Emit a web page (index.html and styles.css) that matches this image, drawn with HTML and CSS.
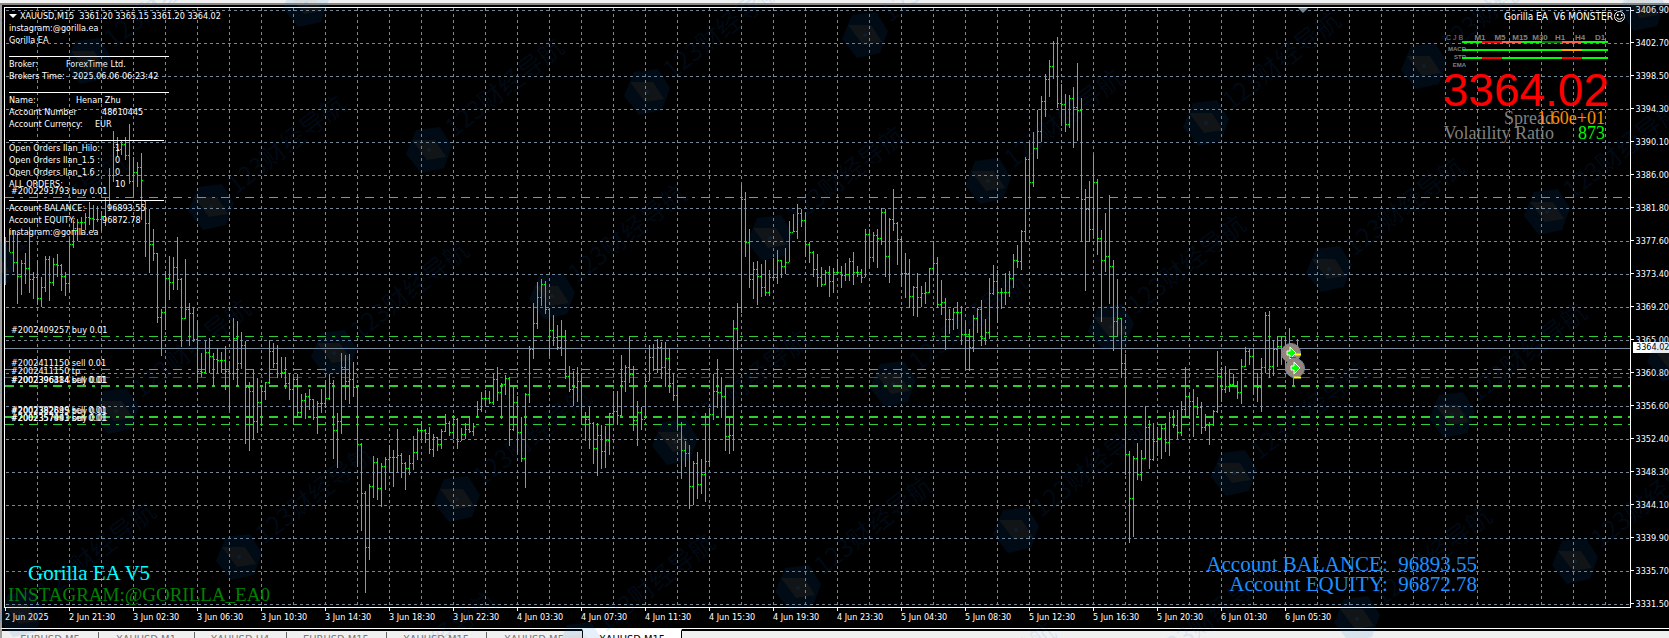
FILE: index.html
```html
<!DOCTYPE html>
<html lang="en">
<head>
<meta charset="utf-8">
<title>XAUUSD,M15</title>
<link rel="stylesheet" href="styles.css">
</head>
<body>
<div class="window">
  <div class="topstrip"></div>
  <main class="chart">
    <section class="plot">
      <svg class="canvas" id="canvas" aria-label="XAUUSD M15 bar chart"></svg>
      <div class="info">
        <h1 class="symbol"><span class="caret"></span>XAUUSD,M15 &nbsp;3361.20 3365.15 3361.20 3364.02</h1>
        <p>instagram:@gorilla.ea</p>
        <p>Gorilla EA</p>
        <hr class="wide">
        <p><span class="l57">Broker:</span>ForexTime Ltd.</p>
        <p><span class="l64">Brokers Time:</span>2025.06.06 06:23:42</p>
        <hr class="wide">
        <p><span class="l67">Name:</span>Henan Zhu</p>
        <p><span class="l93">Account Number</span>48610445</p>
        <p><span class="l86">Account Currency:</span>EUR</p>
        <hr>
        <p><span class="l106">Open Orders Ilan_Hilo:</span>1</p>
        <p><span class="l106">Open Orders Ilan_1.5 :</span>0</p>
        <p><span class="l106">Open Orders Ilan_1.6 :</span>0</p>
        <p><span class="l106">ALL ORDERS:</span>10</p>
        <hr>
        <p><span class="l98">Account BALANCE:</span>96893.55</p>
        <p><span class="l93">Account EQUITY:</span>96872.78</p>
        <p>instagram:@gorilla.ea</p>
      </div>
      <div class="panel">
        <div class="expert"><span>Gorilla EA &nbsp;V6 MONSTER</span>
          <svg width="13" height="13" viewBox="0 0 13 13"><circle cx="6.500" cy="6.500" r="5" fill="none" stroke="#fff"/><path d="M4 4h1.500v2H4zM8 4h1.500v2H8z" fill="#fff"/><path d="M3.500 7.500Q6.500 11 9.500 7.500" fill="none" stroke="#fff"/></svg>
        </div>
        <div class="signals">
          <div class="frames"><span class="cjb">C J B</span><span>M1</span><span>M5</span><span>M15</span><span>M30</span><span>H1</span><span>H4</span><span>D1</span></div>
          <div class="bar"><i></i><i class="red"></i><i class="tomato"></i><i></i><i class="dark"></i><i class="tomato"></i><i class="end"></i></div>
          <div class="name">MACD</div>
          <div class="bar"><i></i><i></i><i></i><i></i><i></i><i class="orange"></i><i class="end"></i></div>
          <div class="name">STR</div>
          <div class="bar"><i></i><i class="red"></i><i></i><i></i><i></i><i class="red"></i><i class="end"></i></div>
          <div class="name">EMA</div>
        </div>
        <div class="bigprice">3364.02</div>
        <dl class="stats">
          <dt class="spread">Spread</dt><dd class="amber">1.60e+01</dd>
          <dt>Volatility Ratio</dt><dd class="lime">873</dd>
        </dl>
      </div>
      <div class="brand"><p class="ea">Gorilla EA V5</p><p class="insta">INSTAGRAM:@GORILLA_EA0</p></div>
      <div class="account"><p>Account BALANCE:&nbsp; 96893.55</p><p>Account EQUITY:&nbsp; 96872.78</p></div>
    </section>
    <aside class="prices" id="prices"><output class="current">3364.02</output></aside>
    <footer class="times" id="times"></footer>
  </main>
  <nav class="tabs">
    <button class="w96">EURUSD,M5</button><button class="w96">XAUUSD,M1</button><button class="w92">XAUUSD,H4</button><button class="w100">EURUSD,M15</button><button class="w100">XAUUSD,M15</button><button class="w96">XAUUSD,M5</button><button class="w100 active">XAUUSD,M15</button><span class="rest"></span>
  </nav>
  <svg class="watermark" id="watermark" aria-hidden="true"></svg>
</div>
<script src="chart.js"></script>
</body>
</html>
```
FILE: styles.css
```css
* { box-sizing: border-box; }
body { margin: 0; background: #000; color: #fff; font: 9px/12px "DejaVu Sans Condensed", "DejaVu Sans", sans-serif; overflow: hidden; }
p, h1, dl, dd { margin: 0; font-weight: normal; }
.window { position: relative; height: 100vh; display: flex; flex-direction: column; overflow: hidden; }
.topstrip { height: 5px; background: #f0f0f0; border-bottom: 2px solid #888; flex: none; }
.chart { flex: 1; min-height: 0; display: grid; grid-template-columns: minmax(0, 1fr) 38px; grid-template-rows: minmax(0, 1fr) 20px; padding-top: 2px; border-left: 2px solid #a0a0a0; }
.plot { position: relative; margin-left: 2px; border: 1px solid #fff; overflow: hidden; }
.canvas { position: absolute; inset: 0; width: 100%; height: 100%; font-size: 9px; }
.grid { stroke: #778899; stroke-dasharray: 3 3; fill: none; }
.level { stroke: #32cd32; stroke-dasharray: 9 6 3 6; }
.level.thick { stroke-width: 2; }
.level.stop { stroke: #f00; }
.bid { stroke: #778899; }
.bars { stroke: #0f0; fill: none; }
.order { fill: #fff; }

.info { position: absolute; left: 4px; top: 1px; white-space: nowrap; }
.info p { display: flex; height: 12px; }
.symbol { display: flex; align-items: center; font-size: 9px; height: 13px; }
.caret { border: 4px solid transparent; border-top-color: #fff; border-bottom: 0; margin-right: 3px; }
.info hr { width: 155px; height: 1px; margin: 10px 0 1px; border: 0; background: #fff; }
.info hr.wide { width: 160px; }
.l57 { width: 57px; } .l64 { width: 64px; } .l67 { width: 67px; } .l86 { width: 86px; }
.l93 { width: 93px; } .l98 { width: 98px; } .l106 { width: 106px; }

.panel { position: absolute; right: 4px; top: 2px; width: 186px; }
.expert { display: flex; justify-content: flex-end; align-items: center; height: 13px; font-size: 10px; }
.signals { margin: 11px 0 0 6px; color: #808080; font: bold 8px/8px "Liberation Sans", sans-serif; }
.frames { display: flex; height: 7px; }
.frames span { width: 20px; text-align: center; }
.frames .cjb { width: 24px; text-align: left; font-size: 7px; font-weight: normal; }
.bar { display: flex; height: 2px; padding-left: 16px; position: relative; }
.bar i { width: 20px; background: #0f0; }
.bar .end { width: 26px; }
.bar .red { background: #f00; }
.bar .tomato { background: #ff6347; }
.bar .dark { background: #008000; }
.bar .orange { background: #ffa500; }
.name { width: 20px; height: 6px; font-size: 6px; text-align: right; line-height: 13px; }
.bigprice { margin: 5px 17px 0 0; color: #f00; font: 46px/40px "Liberation Sans", sans-serif; text-align: right; }
.stats { margin: 1px 17px 0 0; color: #808080; font: 18px/15px "Liberation Serif", serif; display: grid; grid-template-columns: 114px 51px; white-space: nowrap; }
.stats dt { text-align: right; }
.stats dd { display: flex; justify-content: flex-end; }
.amber { color: #ff8c00; }
.lime { color: #0f0; }

.brand { position: absolute; left: 3px; bottom: 2px; font-family: "Liberation Serif", serif; }
.ea { margin-left: 20px; color: #0ff; font-size: 21px; line-height: 21px; }
.insta { color: #008000; font-size: 19px; line-height: 21px; }
.account { position: absolute; right: 153px; bottom: 13px; color: #1e90ff; font: 21px/20px "Liberation Serif", serif; text-align: right; }

.prices { position: relative; margin-top: -3px; font-size: 9px; }
.price { display: flex; align-items: center; height: 33px; gap: 2px; white-space: nowrap; }
.price:first-of-type { height: 12px; margin-bottom: 10px; }
.price::before { content: ""; width: 3px; height: 1px; background: #fff; }
.current { position: absolute; left: 2px; right: 0; top: 338px; height: 11px; padding-left: 3px; background: #fff; color: #000; line-height: 11px; }
.times { grid-column: 1 / -1; display: flex; padding-left: 3px; overflow: hidden; }
.times time { flex: 0 0 64px; white-space: nowrap; line-height: 12px; }
.times time::before { content: ""; display: block; width: 1px; height: 3px; background: #fff; }

.tabs { flex: none; display: flex; height: 10px; overflow: hidden; background: #f0f0f0; border-top: 1px solid #fff; border-left: 2px solid #a0a0a0; align-items: flex-start; }
.tabs button { flex: none; margin: 0; padding: 2px 0 0; border: 0; border-top: 2px solid #000; background: #f0f0f0; color: #777; font: 11px/13px "DejaVu Sans Condensed", sans-serif; position: relative; }
.tabs button + button::before { content: ""; position: absolute; left: 0; top: 1px; width: 1px; height: 8px; background: #666; }
.tabs .active { background: #fff; color: #000; border-top-color: #fff; border-left: 1px solid #000; border-right: 1px solid #000; }
.tabs .active::before { display: none; }
.rest { flex: 1; border-top: 2px solid #000; }
.w92 { width: 92px; } .w96 { width: 96px; } .w100 { width: 100px; }

.watermark { position: absolute; inset: 0; width: 100%; height: 100%; pointer-events: none; font: 25px "Noto Sans CJK SC", sans-serif; }
.mark { fill: rgba(0, 105, 220, 0.1); }
.mark-text { fill: rgba(0, 105, 220, 0.1); }
.diamond { fill: rgba(255, 150, 40, 0.07); }
```
FILE: chart.js
```js
// One bar each: high, low, close (pixel rows of the chart window); a bar opens at the previous close.
const BARS = `237,285,241 229,252,252 230,272,262 233,304,276 260,295,263 253,284,268 227,293,279 272,299,277 261,304,298 277,307,287
256,292,259 256,301,282 258,286,264 254,277,265 264,291,276 272,296,283 239,292,244 220,248,230 219,241,222 217,235,222
213,230,217 202,225,218 205,232,219 206,222,219 211,231,216 198,226,200 168,210,175 131,182,147 137,157,149 141,155,144
137,160,155 124,184,181 157,197,172 162,187,167 153,220,180 201,257,223 209,273,244 229,261,253 253,323,317 309,356,312
271,330,278 256,300,282 257,290,267 237,290,279 278,347,318 259,319,309 303,346,313 307,342,339 321,382,371 353,377,372
341,373,352 338,373,356 353,387,359 348,373,360 352,373,360 346,390,371 361,410,373 318,380,338 321,386,363 332,369,345
341,444,387 382,451,391 369,440,421 378,433,402 387,426,391 382,400,382 340,384,351 343,368,363 345,378,373 357,378,372
357,389,383 373,400,389 377,424,379 374,417,412 394,417,400 393,419,396 389,410,399 399,420,417 401,434,403 389,413,403
380,408,398 374,400,383 380,459,430 413,468,421 353,434,367 355,400,381 354,404,379 362,397,387 387,467,444 443,531,493
491,593,547 484,560,486 456,498,462 458,500,488 463,507,466 457,490,459 445,473,457 450,487,457 429,473,455 453,478,463
462,490,468 455,475,463 436,470,452 428,460,430 421,439,430 429,443,433 427,454,449 434,457,437 437,451,444 429,449,431
414,432,423 421,436,432 415,439,419 418,449,441 428,441,434 423,439,429 416,433,431 423,436,426 401,416,409 392,412,398
390,406,398 391,404,402 374,405,379 367,401,392 383,419,384 375,395,378 377,446,429 387,431,402 396,453,432 417,462,458
393,488,394 346,403,349 303,359,323 282,329,297 279,306,284 281,314,309 308,356,330 315,346,337 325,350,347 320,356,336
330,379,376 366,392,389 371,406,387 367,402,381 373,424,417 412,441,419 407,449,423 422,464,448 423,476,435 425,469,451
426,468,440 413,455,413 391,422,411 391,425,415 355,416,381 365,392,367 336,383,374 366,431,420 401,446,412 407,430,419
374,419,381 345,381,357 344,371,369 339,373,347 342,379,367 342,387,358 348,393,383 374,401,395 386,429,424 422,479,450
441,467,453 445,509,486 461,505,463 452,499,484 459,494,474 413,502,461 408,466,414 374,420,391 359,408,392 377,418,396
386,451,436 418,454,435 320,451,328 303,350,307 185,313,199 192,257,242 229,288,279 262,299,269 261,305,276 264,297,287
260,296,292 270,296,277 258,281,277 250,284,260 260,278,266 248,274,262 221,262,232 214,232,231 204,239,213 209,227,220
213,257,244 242,263,252 251,277,269 254,287,277 267,287,284 270,285,272 266,297,281 268,293,272 259,275,272 266,288,275
263,281,274 258,281,261 252,285,272 266,277,272 269,283,277 229,277,234 229,269,257 232,262,235 229,268,238 208,245,212
209,277,256 218,283,219 189,231,223 222,265,239 238,287,273 253,298,273 259,308,296 286,316,287 273,317,297 286,307,293
282,304,292 268,293,268 241,275,263 257,308,304 280,315,302 298,350,319 309,334,319 308,330,312 302,329,312 306,345,334
322,369,334 329,371,347 315,352,318 308,333,309 300,346,338 319,345,332 278,339,293 265,295,281 270,323,292 288,309,292
273,305,292 271,297,278 254,288,260 245,268,261 230,270,231 157,242,159 143,207,182 132,187,148 110,159,131 96,142,101
74,117,79 60,97,66 41,79,43 37,108,103 84,126,104 94,132,124 95,128,98 87,148,107 63,141,110 98,242,199
189,291,209 181,242,229 155,238,182 179,255,238 230,322,260 213,272,256 195,304,266 260,351,321 279,337,318 318,378,363
354,475,454 451,543,498 456,537,458 443,480,474 450,481,458 406,459,427 420,469,459 423,461,441 427,456,438 424,459,428
423,452,442 412,456,417 410,428,425 410,439,432 401,436,409 367,418,396 393,419,401 389,437,406 397,415,407 402,434,427
414,431,425 422,445,424 410,426,411 351,413,376 367,402,389 366,393,386 369,392,384 374,387,386 381,399,392 359,404,366
347,367,351 348,365,356 348,394,386 373,402,387 358,412,367 312,373,315 311,378,366 340,376,349 337,367,346 337,365,352
337,367,352 328,367,355 347,385,365 339,378,365`.split(/\s+/).map(s => s.split(",").map(Number));

let svg = '<g transform="translate(-5 -8)">';
for (let y = 10; y < 607; y += 33) svg += `<line class="grid" x1="6" x2="120%" y1="${y}.5" y2="${y}.5"/>`;
for (let x = 37; x < 4000; x += 32) svg += `<line class="grid" x1="${x}.5" x2="${x}.5" y1="8" y2="607"/>`;
svg += '<line class="bid" x1="5" x2="120%" y1="348.5" y2="348.5"/>';
for (const [y, cls] of [[197.5, ""], [336.5, ""], [369.5, ""], [377.5, "stop"], [386, "thick"], [417, "thick"], [424.5, ""]])
  svg += `<line class="level ${cls}" x1="5" x2="120%" y1="${y}" y2="${y}"/>`;

let path = "", prev = 238;
BARS.forEach(([high, low, close], i) => {
  const x = 5 + 4 * i;
  const open = Math.max(high, Math.min(low, prev));
  path += `M${x + 0.5} ${high}V${low}M${x - 1} ${open + 0.5}h1M${x + 1} ${close + 0.5}h1`;
  prev = close;
});
svg += `<path class="bars" d="${path}"/>`;

for (const [y, text] of [[194, "#2002293793 buy 0.01"], [333, "#2002409257 buy 0.01"], [366, "#2002411150 sell 0.01"], [374, "#2002411150 tp"],
  [383, "#2002396484 sell 0.01"], [383, "#2002396314 buy 0.01"], [413, "#2002382899 sell 0.01"], [414, "#2002382645 buy 0.01"],
  [421, "#2002357443 buy 0.01"], [421, "#2002357991 sell 0.01"]])
  svg += `<text class="order" x="11" y="${y}">${text}</text>`;

for (const [x, y] of [[1291, 353], [1295, 368]])
  svg += `<circle cx="${x}" cy="${y}" r="9.500" fill="#94847a" stroke="#778899"/>
    <path d="M${x - 4} ${y - 2}h3v-4l6 6-6 6v-4h-3z" fill="#0f0" stroke="#fff"/>`;
svg += '<path d="M1295 354.500h6M1294 377.500h7" stroke="#ff0" stroke-width="2"/><path d="M1290 357.500h6" stroke="#e01040"/>';
svg += '<path d="M1293.500 374v11M1289.500 328v16" class="bars"/><path d="M1298 8h10l-5 5z" fill="#778899"/></g>';
document.getElementById("canvas").innerHTML = svg;

const PRICES = "3406.90 3402.70 3398.50 3394.30 3390.10 3386.00 3381.80 3377.60 3373.40 3369.20 3365.00 3360.80 3356.60 3352.40 3348.30 3344.10 3339.90 3335.70 3331.50";
document.getElementById("prices").insertAdjacentHTML("beforeend", PRICES.split(" ").map(p => `<div class="price">${p}</div>`).join(""));

const TIMES = ["2 Jun 2025", "2 Jun 21:30", "3 Jun 02:30", "3 Jun 06:30", "3 Jun 10:30", "3 Jun 14:30", "3 Jun 18:30", "3 Jun 22:30", "4 Jun 03:30", "4 Jun 07:30",
  "4 Jun 11:30", "4 Jun 15:30", "4 Jun 19:30", "4 Jun 23:30", "5 Jun 04:30", "5 Jun 08:30", "5 Jun 12:30", "5 Jun 16:30", "5 Jun 20:30", "6 Jun 01:30", "6 Jun 05:30"];
document.getElementById("times").innerHTML = TIMES.map(t => `<time>${t}</time>`).join("");

// Watermark lattice
let marks = "";
for (let i = -4; i < 12; i++) for (let j = -8; j < 9; j++) {
  const x = Math.round(334 + 218 * i + 123 * j), y = Math.round(353 - 57.5 * i + 146 * j);
  if (x < -160 || x > 1700 || y < -40 || y > 780) continue;
  marks += `<g transform="translate(${x} ${y})"><path class="mark" d="M-13 -20L11 -23L23 -4L15 18L-8 23L-23 4Z"/>
    <path class="diamond" d="M-17 -10L6 -10L17 7L-2 10Z"/><circle class="mark" r="2"/>
    <text class="mark-text" transform="translate(25 -12) rotate(-38)">123财经导航</text></g>`;
}
document.getElementById("watermark").innerHTML = marks;
```
